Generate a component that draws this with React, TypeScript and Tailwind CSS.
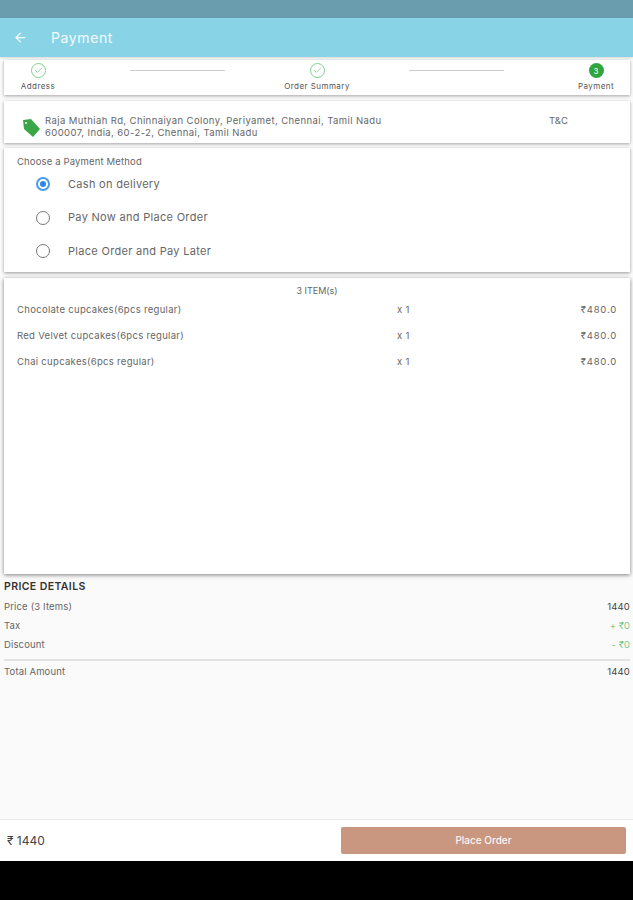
import React from 'react';
import { ArrowLeft, Check } from 'lucide-react';

const font = "font-['Inter','Liberation_Sans',sans-serif]";

const Step = ({ label, active, num }: { label: string; active?: boolean; num?: string }) => (
  <div className="w-[68px] flex flex-col items-center">
    {active ? (
      <div className="w-[15px] h-[15px] rounded-full bg-[#2fa53f] text-white text-[8px] flex items-center justify-center">{num}</div>
    ) : (
      <div className="w-[15px] h-[15px] rounded-full border border-[#7fd08a] flex items-center justify-center">
        <Check size={9} className="text-[#6cc478]" />
      </div>
    )}
    <span className="text-[8px] leading-[10px] mt-[3px] tracking-[0.45px] text-[#555] whitespace-nowrap">{label}</span>
  </div>
);

const Radio = ({ label, checked }: { label: string; checked?: boolean }) => (
  <div className="h-[33.7px] flex items-center pl-[32px]">
    <div className={`w-[14px] h-[14px] rounded-full border flex items-center justify-center ${checked ? 'border-[#4a9bec] border-2' : 'border-[#777]'}`}>
      {checked && <div className="w-[6px] h-[6px] rounded-full bg-[#2b86e6]" />}
    </div>
    <span className="ml-[18px] text-[11px] tracking-[0.3px] text-[#666]">{label}</span>
  </div>
);

const Item = ({ name }: { name: string }) => (
  <div className="h-[26px] flex items-center text-[9.5px] tracking-[0.3px] text-[#666] px-[13px]">
    <span className="w-[380px]">{name}</span>
    <span className="w-[100px]">x 1</span>
    <span className="ml-auto tracking-[0.8px]">₹480.0</span>
  </div>
);

const PriceRow = ({ label, value, green }: { label: string; value: string; green?: boolean }) => (
  <div className="h-[19px] flex items-center justify-between text-[9.5px] tracking-[0.15px] text-[#666]">
    <span>{label}</span>
    <span className={green ? 'text-[#5cb860] font-light' : 'text-[#444] font-normal'}>{value}</span>
  </div>
);

export default function App() {
  return (
    <div className={`${font} w-[633px] h-[900px] flex flex-col bg-[#fafafa] overflow-hidden`}>
      <div className="h-[18px] bg-[#6a9dae] shrink-0" />

      {/* header */}
      <div className="h-[39px] bg-[#89d3e6] shrink-0 flex items-center pl-[13px] text-white/90 shadow-sm">
        <ArrowLeft size={15} />
        <span className="ml-[23px] text-[14px] tracking-[0.6px]">Payment</span>
      </div>

      <div className="flex-1 flex flex-col pl-[4px] pr-[3px] pt-[3px]">
        {/* stepper */}
        <div className="h-[35px] bg-white shadow-[0_1px_3px_rgba(0,0,0,0.35)] flex justify-between items-start pt-[3px] shrink-0">
          <Step label="Address" />
          <div className="w-[95px] h-px bg-[#ccc] mt-[7px]" />
          <Step label="Order Summary" />
          <div className="w-[95px] h-px bg-[#ccc] mt-[7px]" />
          <Step label="Payment" active num="3" />
        </div>

        {/* address */}
        <div className="h-[42px] mt-[6px] bg-white shadow-[0_1px_3px_rgba(0,0,0,0.35)] flex items-start pl-[18px] pt-[14px] shrink-0 text-[9.5px] leading-[12px] text-[#666]">
          <svg width="20" height="18" viewBox="0 0 20 18" className="mt-[4px] shrink-0">
            <path d="M1 1 L9 0 L18 10 L11 18 L2 10 Z" fill="#3aa648" />
            <circle cx="4" cy="4" r="1" fill="#fff" />
          </svg>
          <div className="ml-[3px] w-[350px] tracking-[0.4px]">
            Raja Muthiah Rd, Chinnaiyan Colony, Periyamet, Chennai, Tamil Nadu
            <br />
            600007, India, 60-2-2, Chennai, Tamil Nadu
          </div>
          <span className="ml-[154px]">T&amp;C</span>
        </div>

        {/* payment method */}
        <div className="h-[124px] mt-[5px] bg-white shadow-[0_1px_3px_rgba(0,0,0,0.4)] pt-[7px] shrink-0">
          <div className="pl-[13px] text-[9.5px] leading-[12px] tracking-[0.15px] text-[#666] mt-[1px] -mb-[1px]">Choose a Payment Method</div>
          <Radio label="Cash on delivery" checked />
          <Radio label="Pay Now and Place Order" />
          <Radio label="Place Order and Pay Later" />
        </div>

        {/* items */}
        <div className="h-[296px] mt-[6px] bg-white shadow-[0_1px_4px_rgba(0,0,0,0.5)] pt-[7px] shrink-0">
          <div className="text-center text-[9px] leading-[12px] text-[#666]">3 ITEM(s)</div>
          <Item name="Chocolate cupcakes(6pcs regular)" />
          <Item name="Red Velvet cupcakes(6pcs regular)" />
          <Item name="Chai cupcakes(6pcs regular)" />
        </div>

        {/* price details */}
        <div className="mt-[6px]">
          <div className="text-[10.5px] leading-[13px] tracking-[0.4px] font-semibold text-[#333] mb-[5px]">PRICE DETAILS</div>
          <PriceRow label="Price (3 Items)" value="1440" />
          <PriceRow label="Tax" value="+ ₹0" green />
          <PriceRow label="Discount" value="- ₹0" green />
          <div className="h-[2px] bg-[#e2e2e2] mt-[4px] mb-[2px]" />
          <PriceRow label="Total Amount" value="1440" />
        </div>
      </div>

      {/* footer */}
      <div className="h-[42px] bg-white border-t border-[#e8e8e8] flex items-center justify-between px-[7px] shrink-0">
        <span className="text-[12px] text-[#444]">₹ 1440</span>
        <button className="w-[285px] h-[27px] rounded-[2px] bg-[#c99680] text-white/90 text-[10px] font-medium">Place Order</button>
      </div>
      <div className="h-[39px] bg-black shrink-0" />
    </div>
  );
}
